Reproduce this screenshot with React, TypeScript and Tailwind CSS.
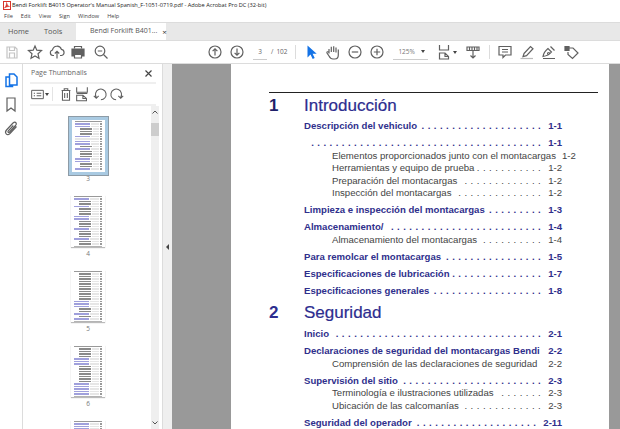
import * as React from 'react'

const sans = "font-['Open_Sans','Noto_Sans',sans-serif]"

const Ic: React.FC<{ w?: number; h?: number; cls?: string; sw?: string; children: React.ReactNode }> = ({ w = 18, h = 18, cls = 'text-[#606060]', sw = '1.2', children }) => (
  <svg width={w} height={h} viewBox="0 0 18 18" fill="none" stroke="currentColor" strokeWidth={sw} className={`shrink-0 ${cls}`}>
    {children}
  </svg>
)

const CircleIc: React.FC<{ d: string }> = ({ d }) => (
  <Ic>
    <circle cx="9" cy="9" r="6" />
    <path d={d} />
  </Ic>
)

const Caret = () => <span className="shrink-0 w-0 h-0 border-x-[2px] border-x-transparent border-t-[3px] border-t-[#444]" />
const Sep = () => <div className="shrink-0 w-[1px] h-[14px] bg-[#dcdcdc]" />

const Thumb: React.FC<{ n: number; rows: string; selected?: boolean; cut?: boolean }> = ({ n, rows, selected, cut }) => (
  <div className="flex flex-col items-center shrink-0">
    <div className={selected ? 'border-[3px] border-[#a9cae2] outline outline-[#8d9ba6]' : 'shadow-[0_1px_1px_#bbb]'}>
      <div className={`${selected ? 'w-[33px] h-[52px]' : 'w-[34px] h-[52px]'} bg-white flex flex-col gap-[1px] px-[3px] py-[1px] overflow-hidden`}>
        <div className="h-[1px] bg-[#999] shrink-0" />
        {rows.split('').map((c, i) => (
          <div key={i} className="flex gap-[1px] h-[1.5px] shrink-0">
            {c === 'b' && <div className="h-full w-[15px] bg-[#a0a0dc]" />}
            {c === 's' && <div className="h-full w-[12px] ml-[5px] bg-[#8a8a8a]" />}
            <div className="h-full flex-1 bg-[#e6e6e6]" />
            <div className="h-full w-[2px] bg-[#999]" />
          </div>
        ))}
        {!selected && <div className="mt-auto h-[2px] bg-[#b4b4b4] shrink-0" />}
      </div>
    </div>
    {!cut && <span className={`text-[6.5px] leading-[6px] text-[#777] ${selected ? 'mt-[1px]' : 'mt-[4px]'}`}>{n}</span>}
  </div>
)

const Row: React.FC<{ t?: string; dots?: number; p: string; sub?: boolean; mt?: number }> = ({ t, dots, p, sub, mt = 0 }) => (
  <div
    className={`flex items-center h-[12.5px] whitespace-nowrap text-[9.6px] ${sub ? 'pl-[28px] text-[#444]' : 'font-bold text-[#2f2f8c]'}`}
    style={{ marginTop: mt }}
  >
    {t && <span>{t}</span>}
    {dots ? (
      <>
        <span className="ml-auto pr-[7px] tracking-[0.4px]">{Array.from({ length: dots }).map(() => '.').join(' ')}</span>
        <span className="shrink-0">{p}</span>
      </>
    ) : (
      <span className="ml-auto pl-[6px] shrink-0">{p}</span>
    )}
  </div>
)

export default function App() {
  return (
    <div className={`w-[620px] h-[429px] overflow-hidden bg-white flex flex-col ${sans}`}>
      {/* title + menu */}
      <div className="h-[11px] flex items-center pl-[3px] text-[5.65px] text-[#222] whitespace-nowrap shrink-0">
        <svg width="8" height="9" viewBox="0 0 8 9" className="shrink-0 mr-[1px]">
          <rect x="0.5" y="0.5" width="7" height="8" fill="#fff" stroke="#d8342c" />
          <path d="M1.500 7C3 5 4 3 3.500 1.500 4 4 5 5 6.500 5.500 4.500 5.500 3 6 1.500 7z" fill="#d8342c" stroke="#d8342c" strokeWidth="0.6" />
        </svg>
        <span>Bendi Forklift B4015 Operator's Manual Spanish_F-1051-0719.pdf - Adobe Acrobat Pro DC (32-bit)</span>
      </div>
      <div className="h-[11px] flex items-center gap-[8px] pl-[4px] text-[5.6px] text-[#444] shrink-0">
        <span>File</span><span>Edit</span><span>View</span><span>Sign</span><span>Window</span><span>Help</span>
      </div>
      {/* tabs */}
      <div className="h-[19px] bg-[#e8e8e8] border-t border-b border-[#dcdcdc] flex items-stretch text-[7.4px] text-[#555] shrink-0">
        <span className="w-[36px] pl-[8px] leading-[17px]">Home</span>
        <span className="w-[40px] pl-[8px] leading-[17px]">Tools</span>
        <div className="w-[90px] bg-white pl-[14px] flex items-center gap-[5px] text-[7px] whitespace-nowrap">
          <span>Bendi Forklift B401...</span><span className="text-[8px] text-[#333]">×</span>
        </div>
      </div>
      {/* toolbar */}
      <div className="h-[23px] border-b border-[#dcdcdc] flex items-center pl-[3px] shrink-0">
        <Ic cls="text-[#c4c4c4]"><path d="M4 4h8l2 2v9H4zM6.500 4v3.500h5V4M6.500 15v-5h5v5" /></Ic>
        <div className="w-[5px] shrink-0" />
        <Ic><path d="M9 3l1.800 4.200 4.700.4-3.500 3.100 1 4.500L9 12.900l-4 2.300 1-4.500-3.500-3.100 4.700-.4z" /></Ic>
        <div className="w-[4px] shrink-0" />
        <Ic><path d="M6 12.500H4.800a2.800 2.800 0 0 1-.3-5.500 4.600 4.600 0 0 1 8.900-.6 3.100 3.100 0 0 1 .2 6.100H12M9 15.500V8.500M6.800 10.500L9 8.300l2.200 2.200" /></Ic>
        <div className="w-[3px] shrink-0" />
        <Ic><path d="M5.500 5.500V3.500h7v2" /><path d="M3 6h12v7h-2v-2H5v2H3z" fill="currentColor" /><path d="M5.500 11.500h7v3.500h-7z" /></Ic>
        <div className="w-[5px] shrink-0" />
        <Ic><circle cx="8" cy="8" r="4.800" /><path d="M11.500 11.500L15.500 15.500M5.800 8h4.400" /></Ic>
        <div className="w-[96px] shrink-0" />
        <CircleIc d="M9 12.500V5.800M6.600 8.200L9 5.800l2.400 2.400" />
        <div className="w-[4px] shrink-0" />
        <CircleIc d="M9 5.500v6.700M6.600 9.800L9 12.200l2.400-2.400" />
        <div className="w-[7px] shrink-0" />
        <span className="w-[14px] text-center text-[6.5px] text-[#666] border-b border-[#ccc] leading-[14px] shrink-0">3</span>
        <span className="text-[6.5px] text-[#666] ml-[4px]">/</span>
        <span className="text-[6.5px] text-[#666] ml-[3px] w-[19px] shrink-0">102</span>
        <Sep />
        <div className="w-[6px] shrink-0" />
        <Ic><path d="M5.500 2.500v12l3-3 2.200 4.500 2-.9-2.100-4.400h4.100z" fill="#1473e6" stroke="none" /></Ic>
        <div className="w-[4px] shrink-0" />
        <Ic><path d="M5 10.500V6M7.300 9V3.800M9.700 9V3.300M12 9.500V4.500M14.300 10V6.500V12c0 2.500-1.500 4-3.500 4H9c-2 0-3-1-4-3L3 10c-.5-1.200 1-1.800 2-.5" /></Ic>
        <div className="w-[4px] shrink-0" />
        <CircleIc d="M5.800 9h6.400" />
        <div className="w-[4px] shrink-0" />
        <CircleIc d="M5.800 9h6.400M9 5.800v6.400" />
        <div className="w-[7px] shrink-0" />
        <span className="w-[35px] shrink-0 text-[6.5px] text-[#777] border-b border-[#ccc] leading-[14px] pl-[5px] pr-[3px] flex items-center justify-between">
          125%<Caret />
        </span>
        <div className="w-[7px] shrink-0" />
        <Ic><path d="M4.500 2v5h9V2M4.500 16v-6h5.500l3.500 3.500V16zM10 10v3.500h3.500" /></Ic>
        <Caret />
        <div className="w-[7px] shrink-0" />
        <Ic><path d="M3 4h12v3.500H3zM5.500 4v3.500M8 4v3.500M10.500 4v3.500M13 4v3.500M9 7.500v7.500M6.500 12.500L9 15l2.500-2.500" /></Ic>
        <div className="w-[7px] shrink-0" />
        <Sep />
        <div className="w-[6px] shrink-0" />
        <Ic><path d="M3 3.500h12V12H9.500L7 14.500V12H3zM6 6.500h6M6 9h6" /></Ic>
        <div className="w-[4px] shrink-0" />
        <Ic><path d="M6 10.500l6.500-7 2.500 2.200-6.500 7-3.500 1z" /><path d="M2.500 15.500h12.500" stroke="#bbb" /></Ic>
        <div className="w-[4px] shrink-0" />
        <Ic><path d="M3 13.500c.5-3 2-5.500 5-8l3.500 3.500c-2 2.500-5 4-8.500 4.500zM8.500 9.500a1 1 0 1 0 .1 0M10.500 3.500l4 4M3 15.500h12" /></Ic>
        <div className="w-[4px] shrink-0" />
        <Ic><path d="M6 5h5l5 5-5.500 5.500L6 11.500V9" /><path d="M3 3.500h4v4H3z" fill="currentColor" /></Ic>
      </div>

      {/* body */}
      <div className="flex-1 flex min-h-0">
        {/* rail */}
        <div className="w-[23px] border-r border-[#dcdcdc] flex flex-col items-center gap-[6px] pt-[7px] shrink-0">
          <Ic cls="text-[#1473e6]" sw="1.5"><path d="M7.500 3H12l3 3v8H7.500zM7.500 6H4v9.500h6.500V14" /></Ic>
          <Ic><path d="M5 3h8v13l-4-3-4 3z" /></Ic>
          <Ic><path d="M14.500 7.500l-6.500 7c-3 2.500-6-.5-3.500-3.500l6.500-7c2.500-2 4.500.5 2.500 2.500l-6 6.500c-1 1-2.200 0-1.200-1.200l5-5.300" /></Ic>
        </div>
        {/* panel */}
        <div className="w-[140px] shrink-0 flex flex-col border-r border-[#dcdcdc] pl-[7px] pr-[3px] min-h-0">
          <div className="h-[20px] flex items-center justify-between pl-[1px] pr-[3px] mr-[3px] border-b-[2px] border-[#efefef] shrink-0 text-[7px] text-[#666]">
            <span>Page Thumbnails</span>
            <svg width="9" height="9" viewBox="0 0 9 9" stroke="#444" strokeWidth="1.200" className="shrink-0"><path d="M1.500 1.500l6 6M7.500 1.500l-6 6" /></svg>
          </div>
          <div className="h-[22px] flex items-center mr-[3px] border-b-[2px] border-[#efefef] shrink-0">
            <Ic w={15} h={15}><path d="M2 4h14v10H2zM4.500 7.500h1.500M8 7.500h5.500M4.500 10.500h1.500M8 10.500h5.500" /></Ic>
            <Caret />
            <div className="ml-[3px] mr-[5px] w-[1px] h-[14px] bg-[#e4e4e4] shrink-0" />
            <Ic w={16} h={16}><path d="M4 5h10M5 5v11h8V5M7 5V3h4v2M7.500 8v5.500M10.500 8v5.500" /></Ic>
            <Ic w={16} h={16}><path d="M3 1.500v5.500h12V1.500M3 8.500h12M3 16.500v-6h7l4 3.500v2.500zM10 10.500V14h4" /></Ic>
            <div className="w-[2px] shrink-0" />
            <Ic w={16} h={16}><path d="M5 13a6 6 0 1 1 5 2.500M2 11l2.800 2.800L7.500 11" /></Ic>
            <div className="w-[1px] shrink-0" />
            <Ic w={16} h={16}><path d="M13 13a6 6 0 1 0-5 2.500M16 11l-2.800 2.800L10.500 11" /></Ic>
          </div>
          <div className="flex-1 flex min-h-0">
            <div className="flex-1 flex flex-col items-center gap-[13px] pt-[11px] pr-[5px] overflow-hidden">
              <Thumb n={3} selected rows="bbsssbxbbsbsssbbssb" />
              <Thumb n={4} rows="bssbsssbbsssbsssbss" />
              <Thumb n={5} rows="sssssssssssbbbssbsb" />
              <Thumb n={6} rows="ssssbbbsssssssbbbbb" />
              <Thumb n={7} cut rows="bbbsssbb" />
            </div>
            <div className="w-[8px] bg-[#efefef] flex flex-col items-center shrink-0">
              <svg width="6" height="4" viewBox="0 0 6 4" fill="none" stroke="#555" className="mt-[4px] shrink-0"><path d="M.5 3.500L3 1l2.500 2.500" /></svg>
              <div className="mt-[9px] w-[8px] h-[13px] bg-[#cdcdcd] shrink-0" />
              <svg width="6" height="4" viewBox="0 0 6 4" fill="none" stroke="#555" className="mt-auto mb-[4px] shrink-0"><path d="M.5.500L3 3l2.500-2.500" /></svg>
            </div>
          </div>
        </div>
        {/* collapse strip */}
        <div className="w-[9px] bg-[#efefef] flex items-center justify-center shrink-0">
          <span className="w-0 h-0 border-y-[3px] border-y-transparent border-r-[3px] border-r-[#444]" />
        </div>
        {/* document */}
        <div className="flex-1 bg-[#999] pl-[59px] pr-[11px] min-w-0">
          <div className="h-full bg-white pt-[28px] pl-[38px] overflow-hidden font-['Liberation_Sans',Arial,sans-serif]">
            <div className="w-[329px] h-[1px] bg-[#222]" />
            <div className="flex items-center h-[24px] mt-[1px] text-[17px] text-[#2d2d8f]">
              <span className="w-[35px] font-bold text-[#1f1f6a]">1</span>
              <span className="[-webkit-text-stroke:0.2px]">Introducción</span>
            </div>
            <div className="w-[258px] ml-[35px]">
              <Row t="Descripción del vehiculo" dots={20} p="1-1" mt={2} />
              <Row dots={38} p="1-1" mt={4.5} />
              <Row t="Elementos proporcionados junto con el montacargas" p="1-2" sub />
              <Row t="Herramientas y equipo de prueba" dots={11} p="1-2" sub />
              <Row t="Preparación del montacargas" dots={13} p="1-2" sub />
              <Row t="Inspección del montacargas" dots={14} p="1-2" sub />
              <Row t="Limpieza e inspección del montacargas" dots={9} p="1-3" mt={4.5} />
              <Row t="Almacenamiento/" dots={25} p="1-4" mt={4.5} />
              <Row t="Almacenamiento del montacargas" dots={10} p="1-4" sub />
              <Row t="Para remolcar el montacargas" dots={16} p="1-5" mt={4.5} />
              <Row t="Especificaciones de lubricación" dots={15} p="1-7" mt={4.5} />
              <Row t="Especificaciones generales" dots={18} p="1-8" mt={4.5} />
            </div>
            <div className="flex items-center h-[24px] mt-[4px] text-[17px] text-[#2d2d8f]">
              <span className="w-[35px] font-bold">2</span>
              <span className="[-webkit-text-stroke:0.2px]">Seguridad</span>
            </div>
            <div className="w-[258px] ml-[35px]">
              <Row t="Inicio" dots={34} p="2-1" mt={3} />
              <Row t="Declaraciones de seguridad del montacargas Bendi" p="2-2" mt={4.5} />
              <Row t="Comprensión de las declaraciones de seguridad" p="2-2" sub />
              <Row t="Supervisión del sitio" dots={23} p="2-3" mt={4.5} />
              <Row t="Terminología e ilustraciones utilizadas" dots={7} p="2-3" sub />
              <Row t="Ubicación de las calcomanías" dots={13} p="2-3" sub />
              <Row t="Seguridad del operador" dots={20} p="2-11" mt={4.5} />
            </div>
          </div>
        </div>
      </div>
    </div>
  )
}
